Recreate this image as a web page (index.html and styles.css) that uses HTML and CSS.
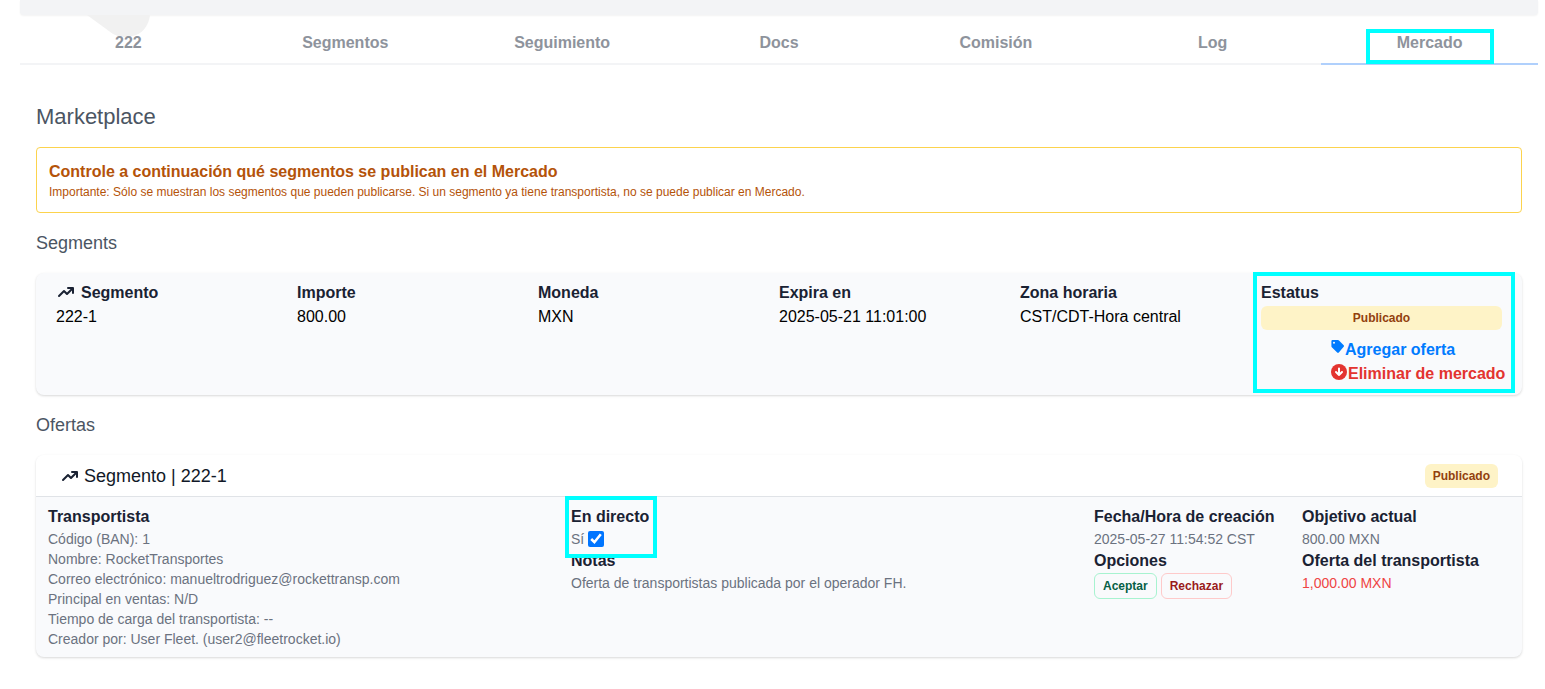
FILE: index.html
```html
<!DOCTYPE html>
<html lang="es">
<head>
    <meta charset="UTF-8">
    <meta name="viewport" content="width=device-width, initial-scale=1.0">
    <title>Marketplace</title>
    <link rel="stylesheet" href="styles.css">
</head>
<body>
    <div class="page">
        <header class="top-bar"></header>
        <nav class="tabs">
            <svg class="tabs-shape" width="64" height="24" viewBox="0 0 64 24" aria-hidden="true"><path d="M0 0H63C62 9 57 17 49 20Q37 25 26 19Z" fill="#f1f1f1"/></svg>
            <a href="#" class="tab">222</a>
            <a href="#" class="tab">Segmentos</a>
            <a href="#" class="tab">Seguimiento</a>
            <a href="#" class="tab">Docs</a>
            <a href="#" class="tab">Comisión</a>
            <a href="#" class="tab">Log</a>
            <a href="#" class="tab active">Mercado</a>
        </nav>
        <main>
            <h1>Marketplace</h1>
            <div class="alert">
                <p class="alert-title">Controle a continuación qué segmentos se publican en el Mercado</p>
                <p class="alert-text">Importante: Sólo se muestran los segmentos que pueden publicarse. Si un segmento ya tiene transportista, no se puede publicar en Mercado.</p>
            </div>

            <h2>Segments</h2>
            <section class="card segment">
                <div>
                    <h3><svg class="trend" viewBox="0 0 20 20" aria-hidden="true"><path fill-rule="evenodd" d="M12 7a1 1 0 110-2h5a1 1 0 011 1v5a1 1 0 11-2 0V8.414l-4.293 4.293a1 1 0 01-1.414 0L8 10.414l-4.293 4.293a1 1 0 01-1.414-1.414l5-5a1 1 0 011.414 0L11 10.586 14.586 7H12z"/></svg>Segmento</h3>
                    <p>222-1</p>
                </div>
                <div>
                    <h3>Importe</h3>
                    <p>800.00</p>
                </div>
                <div>
                    <h3>Moneda</h3>
                    <p>MXN</p>
                </div>
                <div>
                    <h3>Expira en</h3>
                    <p>2025-05-21 11:01:00</p>
                </div>
                <div>
                    <h3>Zona horaria</h3>
                    <p>CST/CDT-Hora central</p>
                </div>
                <div class="status">
                    <h3>Estatus</h3>
                    <span class="badge">Publicado</span>
                    <div class="actions">
                        <a href="#" class="add"><svg class="tag" viewBox="0 0 14 14" aria-hidden="true"><path fill-rule="evenodd" d="M1.5 0H7Q7.6 0 8 .4L12.7 5.2Q13.5 6 12.7 6.8L7.8 12.6Q7 13.4 6.2 12.6L.8 7.2Q.4 6.8.4 6.2V1.2Q.4 0 1.5 0ZM3 1.8a1 1 0 100 2 1 1 0 000-2Z"/></svg>Agregar oferta</a>
                        <a href="#" class="remove"><svg class="down" viewBox="0 0 16 16" aria-hidden="true"><circle cx="8" cy="8" r="8"/><path d="M8 4.5V11M5 8l3 3 3-3" fill="none" stroke="#fff" stroke-width="2" stroke-linecap="round" stroke-linejoin="round"/></svg>Eliminar de mercado</a>
                    </div>
                </div>
            </section>

            <h2>Ofertas</h2>
            <section class="card offer">
                <div class="offer-header">
                    <span class="offer-title"><svg class="trend" viewBox="0 0 20 20" aria-hidden="true"><path fill-rule="evenodd" d="M12 7a1 1 0 110-2h5a1 1 0 011 1v5a1 1 0 11-2 0V8.414l-4.293 4.293a1 1 0 01-1.414 0L8 10.414l-4.293 4.293a1 1 0 01-1.414-1.414l5-5a1 1 0 011.414 0L11 10.586 14.586 7H12z"/></svg>Segmento | 222-1</span>
                    <span class="badge">Publicado</span>
                </div>
                <div class="offer-body">
                    <div>
                        <h3>Transportista</h3>
                        <p>Código (BAN): 1</p>
                        <p>Nombre: RocketTransportes</p>
                        <p>Correo electrónico: manueltrodriguez@rockettransp.com</p>
                        <p>Principal en ventas: N/D</p>
                        <p>Tiempo de carga del transportista: --</p>
                        <p>Creador por: User Fleet. (user2@fleetrocket.io)</p>
                    </div>
                    <div>
                        <div class="live">
                            <h3>En directo</h3>
                            <div class="live-check">
                                <label for="directo">Sí</label>
                                <input type="checkbox" id="directo" name="directo" checked>
                            </div>
                        </div>
                        <h3>Notas</h3>
                        <p>Oferta de transportistas publicada por el operador FH.</p>
                    </div>
                    <div>
                        <h3>Fecha/Hora de creación</h3>
                        <p>2025-05-27 11:54:52 CST</p>
                        <h3>Opciones</h3>
                        <div class="button-group">
                            <button type="button" class="accept">Aceptar</button>
                            <button type="button" class="reject">Rechazar</button>
                        </div>
                    </div>
                    <div>
                        <h3>Objetivo actual</h3>
                        <p>800.00 MXN</p>
                        <h3>Oferta del transportista</h3>
                        <p class="price">1,000.00 MXN</p>
                    </div>
                </div>
            </section>
        </main>
    </div>
</body>
</html>
```
FILE: styles.css
```css
:root {
    --mark: #00ffff;
    --dark: #1a2233;
    --gray: #6b7280;
}
* {
    box-sizing: border-box;
}
body {
    margin: 0;
    font-family: "Liberation Sans", Arial, Helvetica, sans-serif;
    font-size: 16px;
    line-height: 24px;
    color: #000;
    background-color: #fff;
}
h1, h2, h3, p {
    margin: 0;
}
a {
    text-decoration: none;
}
.page {
    padding: 0 7px 0 20px;
}
.top-bar {
    height: 15px;
    background-color: #f3f4f6;
    border-radius: 0 0 4px 4px;
    box-shadow: 0 1px 2px rgba(0, 0, 0, 0.05);
}

/* Tabs */
.tabs {
    position: relative;
    display: grid;
    grid-template-columns: repeat(7, 1fr);
}
.tabs-shape {
    position: absolute;
    left: 67px;
    top: 0;
}
.tab {
    position: relative;
    height: 50px;
    padding-top: 16px;
    text-align: center;
    font-weight: bold;
    color: #8e939c;
    border-bottom: 2px solid #f3f4f6;
}
.tab.active {
    border-bottom-color: #b0d0fc;
}
.tab.active::after {
    content: "";
    position: absolute;
    inset: 14px 44px -1px 45px;
    border: 4px solid var(--mark);
}

main {
    padding: 36px 16px 32px;
}
h1 {
    font-size: 22px;
    font-weight: normal;
    line-height: 32px;
    color: #4b5563;
}
h2 {
    margin: 16px 0;
    font-size: 18px;
    font-weight: normal;
    line-height: 28px;
    color: #4b5563;
}
h3 {
    font-size: 16px;
    line-height: 24px;
    color: var(--dark);
}
.alert {
    margin-top: 14px;
    padding: 12px;
    color: #b45309;
    border: 1px solid #fcd34d;
    border-radius: 4px;
}
.alert-title {
    font-weight: bold;
}
.alert-text {
    font-size: 12px;
    line-height: 16px;
}
.card {
    background-color: #f9fafc;
    border-radius: 8px;
    box-shadow: 0 1px 3px rgba(0, 0, 0, 0.1), 0 1px 2px rgba(0, 0, 0, 0.06);
}
.trend {
    width: 20px;
    height: 20px;
    margin-right: 5px;
    vertical-align: -4px;
    fill: var(--dark);
}
.badge {
    padding: 4px 8px;
    font-size: 12px;
    font-weight: bold;
    line-height: 16px;
    text-align: center;
    color: #92400e;
    background-color: #fef3c7;
    border-radius: 6px;
}

/* Segments */
.segment {
    display: grid;
    grid-template-columns: repeat(6, 1fr);
    padding: 8px 20px 9px;
}
.status {
    position: relative;
}
.status::after {
    content: "";
    position: absolute;
    inset: -9px -13px -7px -8px;
    border: 4px solid var(--mark);
    pointer-events: none;
}
.status .badge {
    display: block;
    margin: 1px 0 8px;
}
.actions {
    display: flex;
    flex-direction: column;
    margin: 0 -4px 0 70px;
    font-weight: bold;
    white-space: nowrap;
}
.add {
    color: #007bff;
}
.remove {
    color: #e3342f;
}
.actions svg {
    fill: currentColor;
}
.tag {
    width: 14px;
    height: 14px;
    vertical-align: 1px;
}
.down {
    width: 16px;
    height: 16px;
    margin-right: 1px;
    vertical-align: -1px;
}

/* Offers */
.offer-header {
    display: flex;
    justify-content: space-between;
    align-items: center;
    height: 42px;
    padding: 0 24px;
    background-color: #fff;
    border-bottom: 1px solid #e0e3e7;
    border-radius: 8px 8px 0 0;
}
.offer-title {
    font-size: 18px;
    color: #111827;
}
.offer-title .trend {
    margin-right: 4px;
}
.offer-body {
    display: grid;
    grid-template-columns: 1fr 1fr 208px 208px;
    padding: 8px 12px;
    font-size: 14px;
    line-height: 20px;
    color: var(--gray);
}
.live {
    position: relative;
    width: max-content;
}
.live::after {
    content: "";
    position: absolute;
    inset: -9px -8px -9px -6px;
    border: 4px solid var(--mark);
    pointer-events: none;
}
.live-check {
    display: flex;
    gap: 4px;
    height: 20px;
    align-items: center;
}
.live-check input {
    width: 16px;
    height: 16px;
    margin: 0;
    accent-color: #0075ff;
}
.button-group {
    display: flex;
    gap: 4px;
}
button {
    padding: 4px 8px;
    font-family: inherit;
    font-size: 12px;
    font-weight: bold;
    line-height: 16px;
    background-color: transparent;
    border: 1px solid;
    border-radius: 6px;
    cursor: pointer;
}
.accept {
    color: #065f46;
    border-color: #a7f3d0;
}
.reject {
    color: #991b1b;
    border-color: #fecaca;
}
.price {
    color: #ef4444;
}
```
